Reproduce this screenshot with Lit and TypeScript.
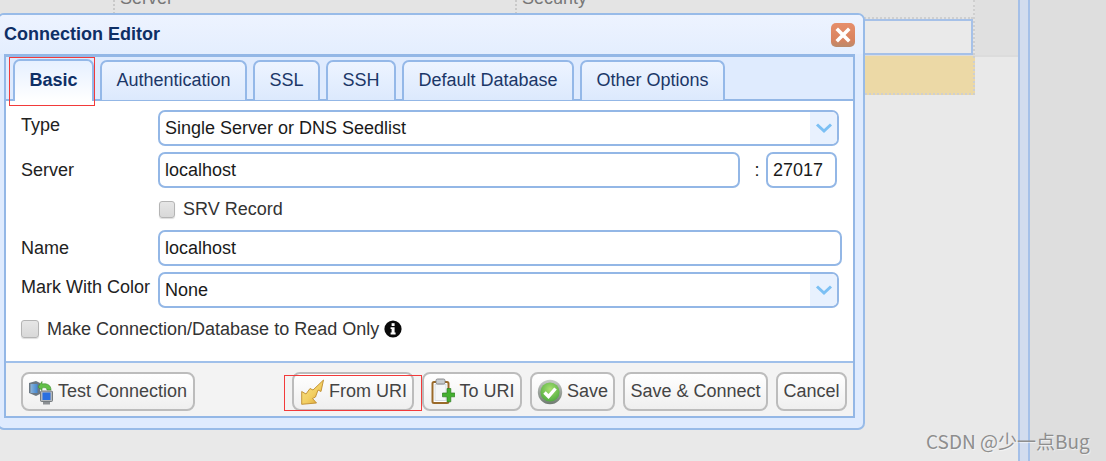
import { LitElement, html, css, svg } from "lit";
import { customElement } from "lit/decorators.js";

const chevron = svg`<svg width="18" height="12" viewBox="0 0 18 12"><path d="M2 2.5 L9 9 L16 2.5" fill="none" stroke="#7cc0f4" stroke-width="3"/></svg>`;

const testIcon = svg`<svg width="26" height="26" viewBox="0 0 26 26">
  <defs><linearGradient id="t1" x1="0" x2="1"><stop offset="0" stop-color="#8fb4d6"/><stop offset="1" stop-color="#3f86d4"/></linearGradient></defs>
  <path d="M1 4 L8 2 L12 4 L12 15 L8 17 L1 14 Z" fill="#6c7883"/>
  <rect x="2.5" y="5" width="7" height="9" fill="url(#t1)"/>
  <path d="M10 8 L14 2.5 L14 5 C19 4 23 6 23 11 L19 11 C19 9 17 8 14 9 L14 11.5 Z" fill="#62c048" stroke="#3b8a2b" stroke-width=".6"/>
  <rect x="12.5" y="12" width="12" height="10.5" rx="1" fill="#b4b8bc" stroke="#5e6468" stroke-width=".8"/>
  <rect x="14.5" y="13.5" width="8" height="7.5" fill="#2a6fe0"/>
  <rect x="15" y="23" width="7" height="2.5" fill="#8c9094"/>
</svg>`;

const fromIcon = svg`<svg width="24" height="26" viewBox="0 0 24 26">
  <defs><linearGradient id="f1" x1="0" y1="0" x2="1" y2="1"><stop offset="0" stop-color="#f8e48a"/><stop offset=".55" stop-color="#f2cf62"/><stop offset="1" stop-color="#d79a30"/></linearGradient></defs>
  <path d="M0.7 12.5 L5 15 L9 9.5 L12 11 L22.5 1 L20 12.5 L17 11 L14.5 18 L11.5 19.5 L15.5 24 L0.7 25.3 Z" fill="url(#f1)" stroke="#c08c2c" stroke-width=".9" stroke-linejoin="round"/>
</svg>`;

const toIcon = svg`<svg width="24" height="27" viewBox="0 0 24 27">
  <rect x="1.5" y="4" width="16" height="21" rx="1.5" fill="#fff" stroke="#9a6a2a" stroke-width="2"/>
  <rect x="4" y="6.5" width="11" height="16" fill="#f4f6f8" stroke="#c4ccd4" stroke-width=".6"/>
  <rect x="5" y="1" width="9" height="5" rx="1.5" fill="#c8ccd0" stroke="#777" stroke-width=".8"/>
  <path d="M11.5 15 h4.5 v-4.5 h3.8 v4.5 h4 v3.8 h-4 v5 h-3.8 v-5 h-4.5 Z" fill="#44b030" stroke="#2c7c20" stroke-width=".7"/>
</svg>`;

const saveIcon = svg`<svg width="26" height="26" viewBox="0 0 26 26">
  <defs>
    <linearGradient id="s1" x1="0" y1="0" x2="0" y2="1"><stop offset="0" stop-color="#c9ccc9"/><stop offset="1" stop-color="#6f7a70"/></linearGradient>
    <radialGradient id="s2" cx=".5" cy=".35" r=".7"><stop offset="0" stop-color="#a8e070"/><stop offset="1" stop-color="#4aa83c"/></radialGradient>
  </defs>
  <circle cx="13" cy="13" r="12.2" fill="url(#s1)"/>
  <circle cx="13" cy="13" r="9.6" fill="url(#s2)"/>
  <path d="M7.5 13.5 L11.5 17.5 L18.5 9.5" fill="none" stroke="#fff" stroke-width="3.4"/>
</svg>`;

const infoIcon = svg`<svg width="18" height="18" viewBox="0 0 18 18">
  <circle cx="9" cy="9" r="8.6" fill="#0a0a0a"/>
  <rect x="7.6" y="3.2" width="3" height="2.8" fill="#fff"/>
  <path d="M6.6 7.2 H10.6 V12.6 H11.6 V14.4 H6.6 V12.6 H7.6 V9 H6.6 Z" fill="#fff"/>
</svg>`;

const closeIcon = svg`<svg width="16" height="16" viewBox="0 0 16 16"><path d="M3 3 L13 13 M13 3 L3 13" stroke="#fff" stroke-width="3.6" stroke-linecap="square"/></svg>`;

@customElement("app-root")
export class AppRoot extends LitElement {
  static styles = css`
    :host {
      display: block;
      width: 1106px;
      height: 461px;
      position: relative;
      overflow: hidden;
      font-family: "Liberation Sans", Arial, sans-serif;
      background: #e9e9e9;
    }
    .desk { display: flex; height: 461px; }
    .main { width: 1018px; flex: none; }
    .splitter {
      width: 8px;
      flex: none;
      background: #d2dcee;
      border-left: 2px solid #a5c0e8;
      border-right: 2px solid #a5c0e8;
    }
    .side { flex: 1; background: #dedede; }

    .thead {
      height: 55px;
      display: flex;
      background: #e4e4e4;
      border-bottom: 2px solid #dcdcdc;
      box-sizing: content-box;
      color: #777;
      font-size: 18px;
    }
    .th { height: 18px; border-right: 2px dotted #c9c9c9; line-height: 10px; }
    .th span { display: block; padding-left: 5px; margin-top: -7px; white-space: nowrap; }
    .th.a { width: 113px; }
    .th.b { width: 400px; }
    .th.c { width: 456px; height: 55px; border-right: 2px dotted #cfcfcf; display: flex; flex-direction: column; }
    .th.c span { height: 18px; flex: none; }
    .dots { height: 0; border-top: 2px dotted #cfcfcf; flex: none; margin-top: 6px; }
    .cell {
      height: 36px;
      flex: none;
      background: #eaeaea;
      border: 2px solid #a6c1e8;
      box-sizing: border-box;
    }
    .thead .rest { flex: 1; background: #e0e0e0; }
    .row-y {
      width: 973px;
      height: 37px;
      background: #ecd9a6;
      border-bottom: 2px dotted #cfcfcf;
      border-right: 2px dotted #cfcfcf;
      box-sizing: content-box;
      margin-top: -1px;
    }

    .dialog {
      position: absolute;
      left: -3px;
      top: 13px;
      width: 868px;
      height: 417px;
      box-sizing: border-box;
      border: 2px solid #98bbe8;
      border-radius: 7px;
      background: #dfebfe;
      display: flex;
      flex-direction: column;
    }
    .titlebar {
      height: 39px;
      flex: none;
      display: flex;
      align-items: center;
      justify-content: space-between;
      padding: 0 8px 0 5px;
      background: linear-gradient(#edf3ff, #e4eefe);
      border-radius: 5px 5px 0 0;
      box-sizing: border-box;
    }
    .title { font-size: 18px; font-weight: bold; color: #0e2f66; }
    .close {
      width: 24px;
      height: 24px;
      border-radius: 5px;
      background: linear-gradient(#e68f6c, #d9835f 70%, #b98a6c);
      display: flex;
      align-items: center;
      justify-content: center;
    }
    .panel {
      margin: 0 8px 0 5px;
      height: 364px;
      box-sizing: border-box;
      border: 2px solid #93b7e6;
      border-top-width: 3px;
      display: flex;
      flex-direction: column;
    }
    .tabs {
      height: 44px;
      flex: none;
      box-sizing: border-box;
      display: flex;
      align-items: flex-end;
      gap: 6px;
      padding-left: 7px;
      background: #dfebfe;
      border-bottom: 2px solid #93b7e6;
    }
    .tab {
      height: 40px;
      box-sizing: border-box;
      border: 2px solid #94b8e8;
      border-bottom: none;
      border-radius: 7px 7px 0 0;
      background: linear-gradient(#edf4ff, #dce9fd);
      color: #1b3768;
      font-size: 18px;
      display: flex;
      align-items: center;
      justify-content: center;
      padding-bottom: 1px;
      margin-bottom: -1px;
    }
    .tab.on {
      background: linear-gradient(#e6f0ff, #fff);
      font-weight: bold;
      color: #0e2f66;
      height: 42px;
      margin-bottom: -2px;
      padding-bottom: 2px;
    }
    .body {
      flex: 1;
      background: #fff;
      padding: 9px 0 0 15px;
      box-sizing: border-box;
      display: flex;
      flex-direction: column;
      color: #1c1c1c;
      font-size: 18px;
    }
    .row { display: flex; height: 36px; align-items: center; margin-bottom: 6px; }
    .label { width: 137px; flex: none; color: #222; }
    .label.up { padding-bottom: 6px; }
    .field {
      height: 36px;
      box-sizing: border-box;
      border: 2px solid #93b7e6;
      border-radius: 7px;
      background: #fff;
      display: flex;
      align-items: center;
      padding-left: 5px;
      overflow: hidden;
      color: #1a1a1a;
    }
    .select { width: 681px; }
    .select .txt { flex: 1; }
    .arrow {
      width: 27px;
      align-self: stretch;
      background: #e8f1fe;
      display: flex;
      align-items: center;
      justify-content: center;
    }
    .host { width: 582px; }
    .colon { width: 26px; text-align: center; flex: none; padding-left: 8px; box-sizing: border-box; }
    .port { width: 71px; }
    .name { width: 684px; }
    .check {
      width: 16px;
      height: 17px;
      flex: none;
      box-sizing: border-box;
      border: 1px solid #b4b4b4;
      border-radius: 3px;
      background: linear-gradient(#e6e6e6, #d8d8d8);
      box-shadow: 0 1px 1px #ddd;
    }
    .check.big { width: 18px; height: 18px; }
    .srv { height: 42px; margin: -6px 0 0 138px; display: flex; align-items: center; gap: 8px; color: #333; }
    .ro { display: flex; align-items: center; margin-top: 6px; color: #333; height: 18px; }
    .ro .check { margin-right: 8px; }
    .ro .i { margin-left: 5px; display: flex; }

    .footer {
      height: 55px;
      flex: none;
      box-sizing: border-box;
      background: #f3f3f3;
      border-top: 2px solid #a0c0ea;
      padding: 9px 0 0 15px;
      display: flex;
      gap: 8px;
      align-items: flex-start;
    }
    .btn {
      height: 39px;
      box-sizing: border-box;
      border: 2px solid #bcbcbc;
      border-radius: 8px;
      background: linear-gradient(#fff, #efefef);
      color: #444;
      font-size: 18px;
      display: flex;
      align-items: center;
      justify-content: center;
      gap: 4px;
      flex: none;
    }
    .btn svg { flex: none; }
    .btn.from { padding-left: 2px; }
    .btn.back { padding-right: 1px; }
    .spacer { width: 81px; flex: none; }

    .mark { position: absolute; border: 1px solid #f23a3a; box-sizing: border-box; pointer-events: none; }
    .m1 { left: 9px; top: 57px; width: 86px; height: 49px; }
    .m2 { left: 284px; top: 375px; width: 138px; height: 36px; }
    .wm {
      position: absolute;
      left: 926px;
      top: 429px;
      font-family: "Noto Sans CJK SC", "Liberation Sans", sans-serif;
      font-size: 19px;
      line-height: 24px;
      color: #8e8e8e;
      text-shadow: 1px 1px 1px rgba(255,255,255,.6);
      white-space: nowrap;
    }
  `;

  render() {
    return html`
      <div class="desk">
        <div class="main">
          <div class="thead">
            <div class="th a"></div>
            <div class="th b"><span>Server</span></div>
            <div class="th c"><span>Security</span><div class="dots"></div><div class="cell"></div></div>
            <div class="rest"></div>
          </div>
          <div class="row-y"></div>
        </div>
        <div class="splitter"></div>
        <div class="side"></div>
      </div>

      <div class="dialog">
        <div class="titlebar">
          <div class="title">Connection Editor</div>
          <div class="close">${closeIcon}</div>
        </div>
        <div class="panel">
          <div class="tabs">
            <div class="tab on" style="width:81px">Basic</div>
            <div class="tab" style="width:147px">Authentication</div>
            <div class="tab" style="width:67px">SSL</div>
            <div class="tab" style="width:70px">SSH</div>
            <div class="tab" style="width:172px">Default Database</div>
            <div class="tab" style="width:145px">Other Options</div>
          </div>
          <div class="body">
            <div class="row">
              <div class="label up">Type</div>
              <div class="field select"><span class="txt">Single Server or DNS Seedlist</span><span class="arrow">${chevron}</span></div>
            </div>
            <div class="row">
              <div class="label">Server</div>
              <div class="field host">localhost</div>
              <div class="colon">:</div>
              <div class="field port">27017</div>
            </div>
            <div class="srv"><span class="check"></span>SRV Record</div>
            <div class="row">
              <div class="label">Name</div>
              <div class="field name">localhost</div>
            </div>
            <div class="row">
              <div class="label up">Mark With Color</div>
              <div class="field select"><span class="txt">None</span><span class="arrow">${chevron}</span></div>
            </div>
            <div class="ro"><span class="check big"></span>Make Connection/Database to Read Only<span class="i">${infoIcon}</span></div>
          </div>
          <div class="footer">
            <div class="btn back" style="width:174px">${testIcon}Test Connection</div>
            <div class="spacer"></div>
            <div class="btn from" style="width:122px">${fromIcon}From URI</div>
            <div class="btn from" style="width:100px">${toIcon}To URI</div>
            <div class="btn" style="width:85px">${saveIcon}Save</div>
            <div class="btn" style="width:145px">Save &amp; Connect</div>
            <div class="btn" style="width:71px">Cancel</div>
          </div>
        </div>
      </div>

      <div class="mark m1"></div>
      <div class="mark m2"></div>
      <div class="wm">CSDN @少一点Bug</div>
    `;
  }
}
